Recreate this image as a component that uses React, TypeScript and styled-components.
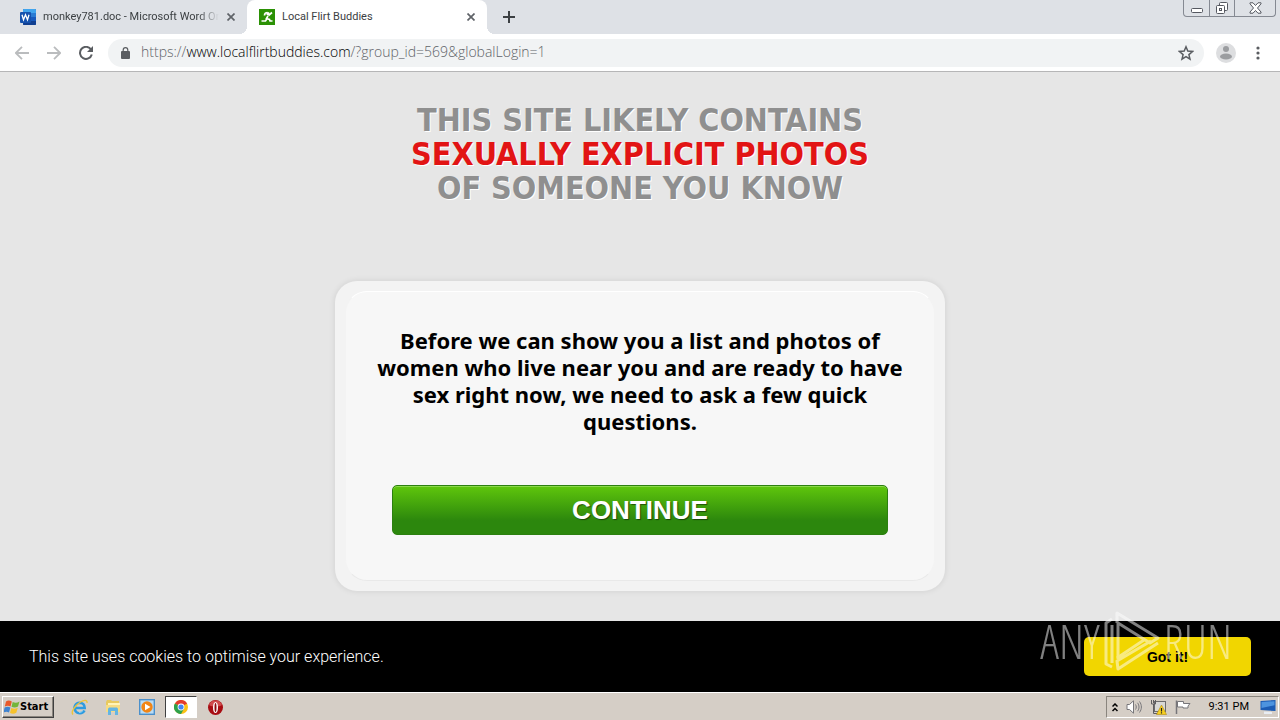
import React from "react";
import styled, { createGlobalStyle } from "styled-components";

const GlobalStyle = createGlobalStyle`
  *, *::before, *::after { box-sizing: border-box; }
  body { margin: 0; background: #e6e6e6; font-family: "Noto Sans", Tahoma, sans-serif; }
  button, input { font: inherit; margin: 0; }
`;

const Screen = styled.div`
  position: relative;
  display: flex;
  flex-direction: column;
  min-height: 100vh;
  overflow: hidden;
`;

/* ---------- browser chrome ---------- */

const TabStrip = styled.header`
  display: flex;
  align-items: flex-start;
  height: 34px;
  padding-left: 8px;
  background: #dee1e6;
`;

const Tab = styled.div<{ $active?: boolean }>`
  position: relative;
  display: flex;
  align-items: center;
  gap: 7px;
  width: ${(p) => (p.$active ? 240 : 239)}px;
  height: 34px;
  padding: 0 11px 0 12px;
  border-radius: 8px 8px 0 0;
  background: ${(p) => (p.$active ? "#fff" : "transparent")};
  &::before, &::after {
    content: "";
    display: ${(p) => (p.$active ? "block" : "none")};
    position: absolute;
    bottom: 0;
    width: 8px;
    height: 8px;
  }
  &::before { left: -8px; background: radial-gradient(circle at 0 0, transparent 8px, #fff 8px); }
  &::after { right: -8px; background: radial-gradient(circle at 100% 0, transparent 8px, #fff 8px); }
`;

const TabTitle = styled.span<{ $fade?: boolean }>`
  flex: 1;
  overflow: hidden;
  white-space: nowrap;
  font: 11px/16px Roboto, Tahoma, sans-serif;
  color: #3c4043;
  ${(p) => p.$fade && "mask-image: linear-gradient(to right, #000 88%, transparent);"}
`;

const IconButton = styled.button<{ $size: number }>`
  display: grid;
  place-items: center;
  flex: none;
  width: ${(p) => p.$size}px;
  height: ${(p) => p.$size}px;
  padding: 0;
  border: 0;
  background: none;
  color: #5f6368;
`;

const NewTab = styled(IconButton)`
  margin: 3px 0 0 8px;
`;

const WindowButtons = styled.div`
  display: flex;
  height: 17px;
  margin: 0 4px 0 auto;
  border: 1px solid #858992;
  border-top: 0;
  border-radius: 0 0 4px 4px;
`;

const WindowButton = styled.button<{ $wide?: boolean }>`
  display: grid;
  place-items: center;
  width: ${(p) => (p.$wide ? 41 : 25)}px;
  padding: 0;
  border: 0;
  background: none;
  & + & { border-left: 1px solid #858992; }
`;

const Toolbar = styled.div`
  display: flex;
  align-items: center;
  height: 38px;
  padding: 0 2px 0 10px;
  border-bottom: 1px solid #b6b6b7;
  background: #fff;
`;

const NavButtons = styled.div`
  display: flex;
  gap: 8px;
`;

const AddressBar = styled.div`
  display: flex;
  flex: 1;
  align-items: center;
  gap: 11px;
  height: 28px;
  margin: 0 10px;
  padding: 0 6px 0 13px;
  border-radius: 14px;
  background: #f1f3f4;
`;

const Url = styled.span`
  flex: 1;
  padding-bottom: 2px;
  white-space: nowrap;
  font: 300 14px/20px "Open Sans", Tahoma, sans-serif;
  color: #5f6368;
  b { font-weight: 300; color: #000; }
`;

/* ---------- page ---------- */

const Page = styled.main`
  display: flex;
  flex: 1;
  flex-direction: column;
  align-items: center;
  padding: 31px 16px 30px;
  background: #e6e6e6;
`;

const Headline = styled.h1`
  margin: 0;
  font: bold 32px/34px "DejaVu Sans Condensed", "Noto Sans", Tahoma, sans-serif;
  text-align: center;
  text-transform: uppercase;
  color: #8f8f8f;
  text-shadow: 1px 1px 0 #fff;
  em { font-style: normal; color: #e21414; }
`;

const Card = styled.section`
  width: 100%;
  max-width: 610px;
  margin-top: 76px;
  padding: 10px;
  border-radius: 22px;
  background: #f3f3f3;
  box-shadow: 0 0 6px rgba(0, 0, 0, 0.1);
`;

const CardBody = styled.div`
  padding: 35px 20px 45px;
  border: 1px solid #f3f3f3;
  border-top-color: #fff;
  border-bottom-color: #e9e9e9;
  border-radius: 22px;
  background: #f7f7f7;
  text-align: center;
`;

const Question = styled.p`
  margin: 0;
  font: bold 22px/27px "Noto Sans", Tahoma, sans-serif;
  color: #000;
`;

const ContinueButton = styled.button`
  display: block;
  width: 100%;
  max-width: 496px;
  height: 50px;
  margin: 50px auto 0;
  padding: 0;
  border: 1px solid #2c8010;
  border-radius: 5px;
  background: linear-gradient(#5fc60c, #2c870d 72%, #2c870d);
  box-shadow: inset 0 1px 0 #8bd84b;
  font: bold 26px/46px "Liberation Sans", Arial, sans-serif;
  color: #fff;
  text-shadow: 1px 1px 1px rgba(0, 0, 0, 0.5);
`;

const CookieBar = styled.aside`
  display: flex;
  align-items: center;
  justify-content: space-between;
  height: 71px;
  padding: 0 29px;
  background: #000;
  color: #fff;
  font: 300 16px/24px Roboto, Arial, sans-serif;
`;

const AcceptButton = styled.button`
  width: 167px;
  height: 39px;
  padding: 0;
  border: 0;
  border-radius: 5px;
  background: #f1d600;
  font: bold 14px/20px "Liberation Sans", Arial, sans-serif;
  color: #000;
`;

const Watermark = styled.div`
  position: absolute;
  right: 48px;
  bottom: 47px;
  display: flex;
  align-items: center;
  gap: 4px;
  color: #fff;
  opacity: 0.5;
  pointer-events: none;
  font: 300 47px/64px "Open Sans Condensed Light", "Roboto Condensed Light", "Liberation Sans Narrow", sans-serif;
`;

/* ---------- taskbar ---------- */

const Taskbar = styled.footer`
  display: flex;
  align-items: center;
  height: 28px;
  padding: 1px 1px 0 2px;
  border-top: 1px solid #fff;
  background: #d5cec6;
`;

const StartButton = styled.button`
  display: flex;
  align-items: center;
  width: 52px;
  height: 22px;
  padding: 0 1px;
  border: 1px solid;
  border-color: #fff #404040 #404040 #fff;
  background: #d5cec6;
  box-shadow: inset -1px -1px 0 #8a857e;
  font: bold 11px/16px "DejaVu Sans Condensed", "Noto Sans", Tahoma, sans-serif;
  color: #000;
`;

const QuickLaunch = styled.div`
  display: flex;
  gap: 2px;
  margin-left: 9px;
`;

const LaunchButton = styled.button<{ $pressed?: boolean }>`
  display: grid;
  place-items: center;
  width: 32px;
  height: 22px;
  padding: 0;
  border: 1px solid;
  border-color: ${(p) => (p.$pressed ? "#404040 #fff #fff #404040" : "transparent")};
  background: ${(p) => (p.$pressed ? "#fff" : "none")};
`;

const Tray = styled.div`
  display: flex;
  align-items: center;
  gap: 8px;
  height: 22px;
  margin-left: auto;
  padding: 0 2px 0 5px;
  border: 1px solid;
  border-color: #8a857e #fff #fff #8a857e;
  color: #000;
`;

const Clock = styled.time`
  margin: 0 3px 0 10px;
  font: 11px/16px Roboto, Tahoma, sans-serif;
  white-space: nowrap;
`;

/* ---------- icons ---------- */

const CloseIcon = () => (
  <svg width="8" height="8" viewBox="0 0 8 8" stroke="currentColor" strokeWidth="1.7">
    <path d="M.5.5l7 7M7.500.5l-7 7" />
  </svg>
);

const WordIcon = () => (
  <svg width="16" height="16" viewBox="0 0 16 16">
    <rect x="3" y="0" width="13" height="16" rx="1" fill="#185abd" />
    <path d="M4 0h11a1 1 0 011 1v3H3V1a1 1 0 011-1z" fill="#41a5ee" />
    <path d="M3 4h13v4H3z" fill="#2b7cd3" />
    <path d="M3 12h13v3a1 1 0 01-1 1H4a1 1 0 01-1-1z" fill="#103f91" />
    <rect x="0" y="3" width="11" height="11" rx="1" fill="#1552ae" />
    <path d="M2 5.800l1.500 5 2-5 2 5 1.500-5" fill="none" stroke="#fff" strokeWidth="1.300" />
  </svg>
);

const FlirtIcon = () => (
  <svg width="16" height="16" viewBox="0 0 16 16">
    <rect width="16" height="16" fill="#2b9105" />
    <path d="M2.500 12h4l1.500-2.500M5.500 6.500C5.500 4.500 7 3.500 8.500 3.500M9.500 6.500L13 3.500M9 7L7.500 9.500l3 1 .5 1.500h2.500" fill="none" stroke="#fff" strokeWidth="1.700" />
    <circle cx="9" cy="4.800" r="1.700" fill="#fff" />
  </svg>
);

const ArrowIcon = ({ flip }: { flip?: boolean }) => (
  <svg width="14" height="14" viewBox="0 0 14 14" fill="none" stroke="#babcbe" strokeWidth="1.800">
    <path d={flip ? "M0 7h13M7 .8L13.200 7 7 13.200" : "M14 7H1M7 .8L.8 7 7 13.200"} />
  </svg>
);

const ReloadIcon = () => (
  <svg width="14" height="14" viewBox="0 0 14 14">
    <path d="M12 3.500A6 6 0 1012.800 8.500" fill="none" stroke="#5a5d61" strokeWidth="2" />
    <path d="M14 0v6H8z" fill="#5a5d61" />
  </svg>
);

const LockIcon = () => (
  <svg width="9" height="12" viewBox="0 0 9 12">
    <rect y="4" width="9" height="8" rx="1" fill="#5a5d61" />
    <path d="M2.200 5V3a2.300 2.300 0 014.600 0v2" fill="none" stroke="#5a5d61" strokeWidth="1.200" />
  </svg>
);

const StarIcon = () => (
  <svg width="16" height="16" viewBox="0 0 16 16" fill="none" stroke="#5a5d61" strokeWidth="1.500">
    <path d="M8 1.800l1.800 4.300 4.700.4-3.600 3.100 1.100 4.600L8 11.700l-4 2.500 1.100-4.600L1.500 6.500l4.700-.4z" />
  </svg>
);

const AvatarIcon = () => (
  <svg width="20" height="20" viewBox="0 0 20 20">
    <circle cx="10" cy="10" r="10" fill="#dddee0" />
    <circle cx="10" cy="6" r="3" fill="#9b9da0" />
    <ellipse cx="10" cy="13.500" rx="6" ry="3" fill="#9b9da0" />
  </svg>
);

const MenuIcon = () => (
  <svg width="4" height="14" viewBox="0 0 4 14" fill="#5a5d61">
    <circle cx="2" cy="2" r="1.600" />
    <circle cx="2" cy="7" r="1.600" />
    <circle cx="2" cy="12" r="1.600" />
  </svg>
);

const MinimizeIcon = () => (
  <svg width="12" height="14" viewBox="0 0 12 14">
    <rect x=".5" y="7.500" width="11" height="4" rx="1" fill="#fff" stroke="#555860" />
  </svg>
);

const RestoreIcon = () => (
  <svg width="13" height="13" viewBox="0 0 13 13" fill="#fff" stroke="#555860">
    <rect x="3.500" y=".5" width="8" height="8" rx="1" />
    <rect x=".5" y="3.500" width="8" height="8" rx="1" />
    <rect x="3.500" y="6.500" width="2" height="2" />
  </svg>
);

const WindowCloseIcon = () => (
  <svg width="13" height="12" viewBox="0 0 13 12" fill="#fff" stroke="#555860">
    <path d="M1 .8h3l2.500 2.700L9 .8h3v1L8.500 6l3.500 4v1.200H9L6.500 8.500 4 11.200H1V10l3.500-4L1 1.800z" />
  </svg>
);

const PlayMark = () => (
  <svg width="56" height="64" viewBox="0 0 56 64" fill="none" stroke="#fff" strokeWidth="3" strokeLinejoin="round">
    <path d="M8 10L2 14v41l6 3M8 16v38" />
    <path d="M13 14V4l41 25-8 5-32-20v36" />
    <path d="M40 31L13 49M54 34L14 60l-1-8 34-20" />
  </svg>
);

const WindowsIcon = () => (
  <svg width="16" height="16" viewBox="0 0 16 16">
    <path d="M2 2.500C4 1 6 1.500 7.800 2.500L6.500 7.500C4.500 6.300 3 6.500.8 7.500z" fill="#e8592b" />
    <path d="M8.700 3C11 4 13 4 15.500 2.500L14 7.500c-2 1.200-4.200 1.300-6.500.3z" fill="#74b53b" />
    <path d="M.6 8.500c2-1 4-1 5.800 0L5 13.500c-2-1.200-3.500-1-5.500 0z" fill="#3f83d0" />
    <path d="M7.300 9c2.200 1 4.200 1 6.500-.3l-1.500 5c-2 1.200-4.200 1.200-6.300.2z" fill="#f6c22c" />
  </svg>
);

const ExplorerIcon = () => (
  <svg width="17" height="17" viewBox="0 0 17 17" fill="none">
    <path d="M13.500 11.500A5.300 5.300 0 118.500 3.700c3.200 0 5.200 2.200 5.200 5.300H4.500" stroke="#2d9be0" strokeWidth="2.600" />
    <path d="M12 11.500a4.500 4.500 0 01-4 2" stroke="#8bd3f7" />
    <path d="M2 15.500C-.5 13 4 6.500 9.500 3 13 .8 16.500.5 16 4" stroke="#ecc43b" strokeWidth="1.400" />
  </svg>
);

const FolderIcon = () => (
  <svg width="16" height="16" viewBox="0 0 16 16">
    <path d="M1 3l1-2h4l1 1h7v10H1z" fill="#e8c95e" />
    <path d="M3 4h12v8H3z" fill="#fff4b8" />
    <path d="M1 6h14v7H1z" fill="#f6dc83" />
    <path d="M3 16V10.500C3 9 4 8.500 5 8.500h6c1.200 0 2 .5 2 2V16h-3v-4H6v4z" fill="#64b5e2" />
  </svg>
);

const MediaIcon = () => (
  <svg width="16" height="16" viewBox="0 0 16 16">
    <rect x=".7" y=".7" width="14.600" height="14.600" fill="#b9dcf5" stroke="#4b90cb" strokeWidth="1.400" />
    <circle cx="8" cy="8" r="5.700" fill="#f18516" />
    <path d="M6 4.800v6.400L11.500 8z" fill="#fff" />
  </svg>
);

const ChromeIcon = () => (
  <svg width="14" height="14" viewBox="0 0 14 14">
    <circle cx="7" cy="7" r="7" fill="#fbc116" />
    <path d="M7 7L.9 3.500A7 7 0 0113.100 3.500z" fill="#e33b2e" />
    <path d="M7 7L.9 3.500A7 7 0 007 14l3-5.300z" fill="#2da14b" />
    <circle cx="7" cy="7" r="3.400" fill="#fff" />
    <circle cx="7" cy="7" r="2.600" fill="#4285f4" />
  </svg>
);

const OperaIcon = () => (
  <svg width="15" height="15" viewBox="0 0 15 15">
    <circle cx="7.500" cy="7.500" r="7.500" fill="#a80c12" />
    <path d="M1 5a7 7 0 0113 0c-3 2-10 2-13 0z" fill="#d04a4c" />
    <ellipse cx="7.500" cy="7.500" rx="2.500" ry="5.500" fill="#fff" />
    <ellipse cx="7.500" cy="7.500" rx="1" ry="4.500" fill="#8c0a0e" />
  </svg>
);

const ChevronsIcon = () => (
  <svg width="6" height="9" viewBox="0 0 6 9" fill="none" stroke="#000" strokeWidth="1.500">
    <path d="M.5 3.500L3 1l2.500 2.500M.5 8L3 5.500 5.500 8" />
  </svg>
);

const SpeakerIcon = () => (
  <svg width="16" height="14" viewBox="0 0 16 14" fill="none" stroke="#77767a">
    <path d="M1 4.500h2.500L7.500.8v12.400l-4-3.700H1z" fill="#fff" />
    <path d="M9.500 4.500c1 1.500 1 3.500 0 5M11.500 2.800c2 2.500 2 6 0 8.400M13.500 1.500c2.500 3.500 2.500 7.500 0 11" />
  </svg>
);

const NetworkIcon = () => (
  <svg width="17" height="16" viewBox="0 0 17 16">
    <rect x="4.500" y="2.500" width="11" height="10" fill="#d8d8d6" stroke="#6c6b6d" />
    <path d="M1.500 1v4h4V1M3.500 1v3M3.500 5v9.500h4" fill="none" stroke="#5e5d60" />
    <path d="M11.500 6l5 9.500h-10z" fill="#f6cf1f" stroke="#b38c0c" strokeWidth=".6" />
    <path d="M11.500 9v3.500M11.500 13.300v1.200" stroke="#222" strokeWidth="1.200" />
  </svg>
);

const FlagIcon = () => (
  <svg width="16" height="14" viewBox="0 0 16 14" stroke="#77767a" fill="#fff">
    <path d="M2.500 1.500h6v2h6.500l-2 2.500 0 2h-5v-1h-5.500z" />
    <path d="M1.500.5v13.500" strokeWidth="1.500" />
  </svg>
);

const DesktopIcon = () => (
  <svg width="16" height="14" viewBox="0 0 16 14">
    <path d="M.5 1L15.500 0v11L.5 10z" fill="#1c5cb4" />
    <path d="M1.500 2l13-.8v4L1.500 8z" fill="#4d94df" />
    <path d="M4 11.500l8 .3V14H4z" fill="#e8edf3" />
  </svg>
);

export default function App() {
  return (
    <Screen>
      <GlobalStyle />
      <TabStrip>
        <Tab>
          <WordIcon />
          <TabTitle $fade>monkey781.doc - Microsoft Word On</TabTitle>
          <IconButton $size={10} aria-label="Close tab"><CloseIcon /></IconButton>
        </Tab>
        <Tab $active>
          <FlirtIcon />
          <TabTitle>Local Flirt Buddies</TabTitle>
          <IconButton $size={10} aria-label="Close tab"><CloseIcon /></IconButton>
        </Tab>
        <NewTab $size={28} aria-label="New tab">
          <svg width="12" height="12" viewBox="0 0 12 12" stroke="#3c4043" strokeWidth="2">
            <path d="M6 0v12M0 6h12" />
          </svg>
        </NewTab>
        <WindowButtons>
          <WindowButton aria-label="Minimize"><MinimizeIcon /></WindowButton>
          <WindowButton aria-label="Restore"><RestoreIcon /></WindowButton>
          <WindowButton $wide aria-label="Close"><WindowCloseIcon /></WindowButton>
        </WindowButtons>
      </TabStrip>

      <Toolbar>
        <NavButtons>
          <IconButton $size={24} aria-label="Back"><ArrowIcon /></IconButton>
          <IconButton $size={24} aria-label="Forward"><ArrowIcon flip /></IconButton>
          <IconButton $size={24} aria-label="Reload"><ReloadIcon /></IconButton>
        </NavButtons>
        <AddressBar>
          <LockIcon />
          <Url>https://<b>www.localflirtbuddies.com</b>/?group_id=569&amp;globalLogin=1</Url>
          <IconButton $size={24} aria-label="Bookmark"><StarIcon /></IconButton>
        </AddressBar>
        <IconButton $size={24} aria-label="Profile"><AvatarIcon /></IconButton>
        <IconButton $size={40} aria-label="Menu"><MenuIcon /></IconButton>
      </Toolbar>

      <Page>
        <Headline>
          This site likely contains<br />
          <em>sexually explicit photos</em><br />
          of someone you know
        </Headline>
        <Card>
          <CardBody>
            <Question>
              Before we can show you a list and photos of<br />
              women who live near you and are ready to have<br />
              sex right now, we need to ask a few quick<br />
              questions.
            </Question>
            <ContinueButton>CONTINUE</ContinueButton>
          </CardBody>
        </Card>
      </Page>

      <CookieBar>
        <span>This site uses cookies to optimise your experience.</span>
        <AcceptButton>Got it!</AcceptButton>
      </CookieBar>

      <Taskbar>
        <StartButton><WindowsIcon />Start</StartButton>
        <QuickLaunch>
          <LaunchButton aria-label="Internet Explorer"><ExplorerIcon /></LaunchButton>
          <LaunchButton aria-label="File Explorer"><FolderIcon /></LaunchButton>
          <LaunchButton aria-label="Media Player"><MediaIcon /></LaunchButton>
          <LaunchButton $pressed aria-label="Chrome"><ChromeIcon /></LaunchButton>
          <LaunchButton aria-label="Opera"><OperaIcon /></LaunchButton>
        </QuickLaunch>
        <Tray>
          <ChevronsIcon />
          <SpeakerIcon />
          <NetworkIcon />
          <FlagIcon />
          <Clock>9:31 PM</Clock>
          <DesktopIcon />
        </Tray>
      </Taskbar>

      <Watermark>
        <span>ANY</span>
        <PlayMark />
        <span>RUN</span>
      </Watermark>
    </Screen>
  );
}
